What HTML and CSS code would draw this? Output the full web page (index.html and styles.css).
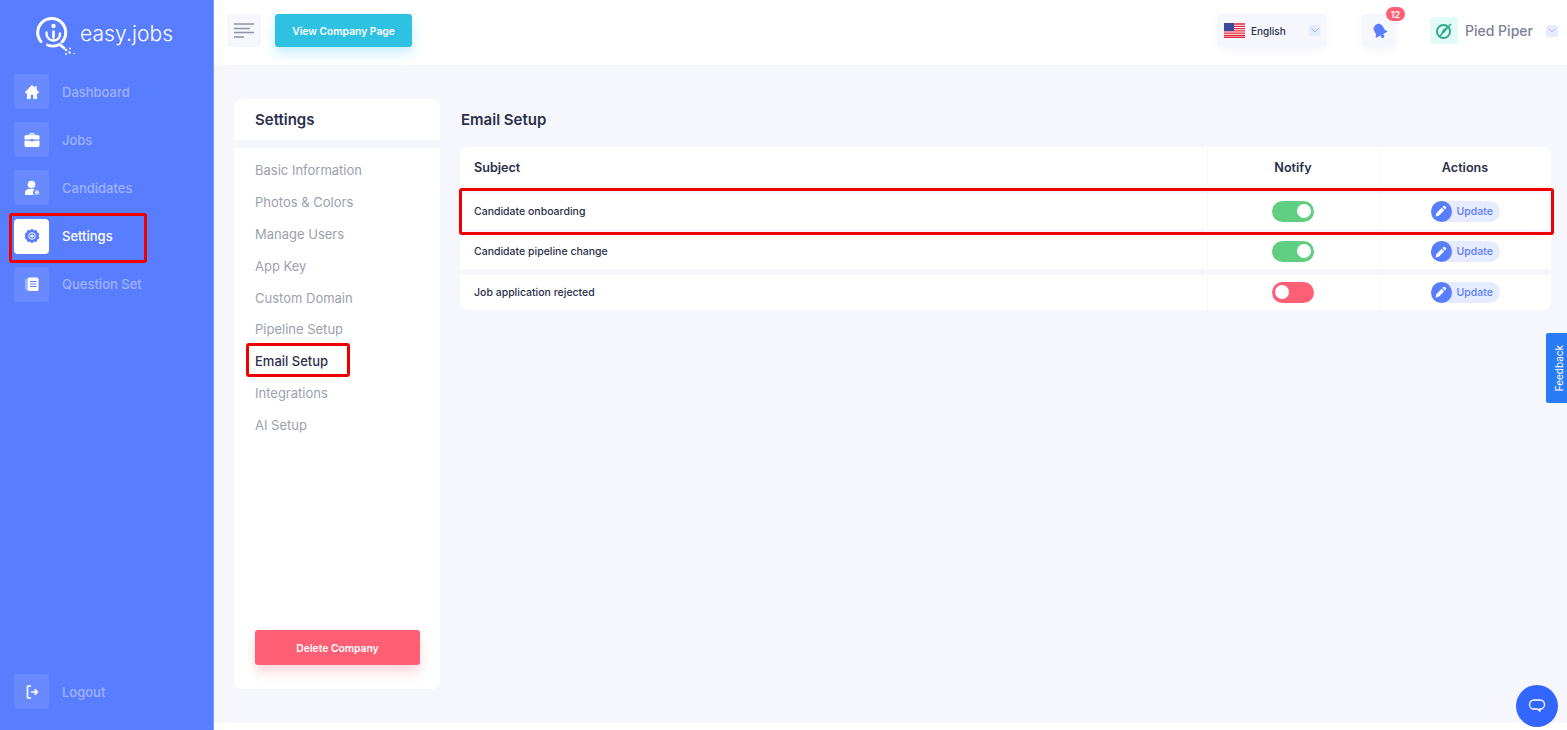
FILE: index.html
```html
<!DOCTYPE html>
<html lang="en">
<head>
<meta charset="utf-8">
<title>Email Setup</title>
<link rel="stylesheet" href="styles.css">
</head>
<body>
<div class="app">
  <aside class="sidebar">
    <div class="brand">
      <svg class="brand-mark" viewBox="0 0 44 44" width="44" height="44" fill="none" stroke="#fff">
        <path d="M8 27.500A14 14 0 1 1 29 28" stroke-width="3" stroke-linecap="round"/>
        <path d="M14.500 31A14.500 14.500 0 0 0 26.500 30.500L31 34" stroke-width="2.800" stroke-linecap="round"/>
        <path d="M13.500 18.500a7 7 0 0 0 7.300 8c3.900 0 6.400-3 6.200-7" stroke-width="2.300" stroke-linecap="round"/>
        <path d="M20.500 17.500v6" stroke-width="2.600" stroke-linecap="round"/>
        <circle cx="20.500" cy="12" r="2.200" fill="#fff" stroke="none"/>
        <g fill="#fff" stroke="none"><circle cx="33" cy="36" r="1.300"/><circle cx="37" cy="34.500" r="1"/><circle cx="36.500" cy="38.500" r="1.200"/><circle cx="33" cy="40" r=".9"/><circle cx="41" cy="39.500" r=".7"/></g>
      </svg>
      <span class="brand-name">easy.jobs</span>
    </div>
    <nav class="side-nav">
      <a class="side-item"><span class="side-icon"><svg viewBox="0 0 16 16" width="16" height="16" fill="#fff"><path d="M8 1 .8 8.200l.9 1H3V15h3.700v-4.200h2.600V15H13V9.200h1.300l.9-1-2.500-2.500V2.200h-2v1.500z"/></svg></span><span class="side-label">Dashboard</span></a>
      <a class="side-item"><span class="side-icon"><svg viewBox="0 0 16 16" width="16" height="16" fill="#fff"><path d="M5.500 3V2a1 1 0 0 1 1-1h3a1 1 0 0 1 1 1v1h3.500A1.500 1.500 0 0 1 15.500 4.500V7.600H9.300V7H6.700v.6H.5V4.500A1.500 1.500 0 0 1 2 3zm1.200 0h2.600V2.200H6.700zM.5 8.700h6.200v.9h2.600v-.9h6.200v4.800a1.500 1.500 0 0 1-1.500 1.500H2a1.500 1.500 0 0 1-1.500-1.500z"/></svg></span><span class="side-label">Jobs</span></a>
      <a class="side-item"><span class="side-icon"><svg viewBox="0 0 16 16" width="16" height="16" fill="#fff"><circle cx="7.500" cy="4.500" r="3.800"/><path d="M1 15v-2.500C1 10.300 3 9 5 9h4c.7 0 1.300.1 1.900.4-1.200.5-2 1.700-2 3 0 1 .4 1.900 1.100 2.600z"/><circle cx="13" cy="12.500" r="2.300" opacity=".7"/></svg></span><span class="side-label">Candidates</span></a>
      <a class="side-item is-active"><span class="side-icon"><svg viewBox="0 0 16 16" width="16" height="16"><path fill="#597dff" d="m8 .8 2 1.500 2.500-.2.900 2.300 2 1.500L14.700 8l.7 2.100-2 1.500-.9 2.300-2.500-.2L8 15.200l-2-1.500-2.500.2-.9-2.300-2-1.500L1.300 8 .6 5.900l2-1.500.9-2.300 2.500.2z"/><circle cx="8" cy="8" r="3.300" fill="none" stroke="#fff" stroke-width="1"/><circle cx="8" cy="8" r="1.600" fill="#fff"/></svg></span><span class="side-label">Settings</span></a>
      <a class="side-item"><span class="side-icon"><svg viewBox="0 0 16 16" width="16" height="16"><rect x="3.500" y="1.500" width="11" height="13.500" rx="1.500" fill="#fff"/><path d="M2 3v11" stroke="#a9c4ff" stroke-width="1.500"/><path d="M6 5.500h6.500M6 8h6.500M6 10.500h6.500" stroke="#597dff"/></svg></span><span class="side-label">Question Set</span></a>
    </nav>
    <a class="side-item logout"><span class="side-icon"><svg viewBox="0 0 16 16" width="16" height="16" fill="none" stroke="#fff" stroke-width="1.600" stroke-linecap="round" stroke-linejoin="round"><path d="M6.500 2H3.500v12h3"/><path d="M7.500 8h6M11 5.700 13.500 8 11 10.300"/></svg></span><span class="side-label">Logout</span></a>
  </aside>

  <div class="workspace">
    <header class="topbar">
      <button class="menu-btn" aria-label="Menu">
        <svg viewBox="0 0 20 15" width="20" height="15" stroke="#8f93a8" stroke-width="1.300"><path d="M0 1h20M0 5.500h16M0 9.500h20M0 14h10"/></svg>
      </button>
      <a class="view-btn">View Company Page</a>
      <div class="lang">
        <svg class="flag" viewBox="0 0 21 15" width="21" height="15">
          <rect width="21" height="15" fill="#fff"/>
          <path d="M0 1h21M0 3.300h21M0 5.600h21M0 7.900h21M0 10.200h21M0 12.500h21M0 14.500h21" stroke="#e0263c" stroke-width="1.300"/>
          <rect width="10" height="8" fill="#3c4a9c"/>
        </svg>
        <span class="lang-name">English</span>
        <span class="chev"><svg viewBox="0 0 8 5" width="8" height="5" fill="none" stroke="#a9b6f0" stroke-width="1"><path d="m.5.500 3.500 3.500L7.500.5"/></svg></span>
      </div>
      <div class="bell">
        <svg viewBox="0 0 16 16" width="17" height="17"><g transform="rotate(-28 8 8)"><path d="M8 1.500c-3.200 0-4.600 2.600-4.600 5.200v3L1.500 12.500h13L12.600 9.700v-3C12.600 4.100 11.200 1.500 8 1.500z" fill="#597dff"/><circle cx="8" cy="14" r="1.700" fill="#597dff"/><path d="M3.400 9.700v-3C3.400 5 4 3.400 5.500 2.400" stroke="#ff8fc0" stroke-width=".7" fill="none"/></g></svg>
        <span class="badge">12</span>
      </div>
      <div class="company">
        <span class="company-logo">
          <svg viewBox="0 0 18 18" width="18" height="18" fill="none" stroke="#2fa98c"><circle cx="8.500" cy="9.500" r="6.500" stroke-width="2"/><path d="M4.500 14.500 16 2" stroke-width="1.600"/><path d="M8 7.500 12 5l-2 5-4 2.500z" fill="#2fa98c" stroke="none"/></svg>
        </span>
        <span class="company-name">Pied Piper</span>
        <span class="chev chev-sm"><svg viewBox="0 0 8 5" width="8" height="5" fill="none" stroke="#a9b6f0" stroke-width="1"><path d="m.5.500 3.500 3.500L7.500.5"/></svg></span>
      </div>
    </header>

    <main class="main">
      <section class="settings">
        <h2 class="settings-title">Settings</h2>
        <div class="settings-body">
          <ul class="settings-list">
            <li>Basic Information</li>
            <li>Photos &amp; Colors</li>
            <li>Manage Users</li>
            <li>App Key</li>
            <li>Custom Domain</li>
            <li>Pipeline Setup</li>
            <li class="is-current">Email Setup</li>
            <li>Integrations</li>
            <li>AI Setup</li>
          </ul>
          <a class="delete-btn">Delete Company</a>
        </div>
      </section>

      <section class="content">
        <h2 class="content-title">Email Setup</h2>
        <div class="table">
          <div class="row row-head">
            <div class="cell cell-subject">Subject</div>
            <div class="cell cell-mid">Notify</div>
            <div class="cell cell-mid">Actions</div>
          </div>
          <div class="row row-first">
            <div class="cell cell-subject">Candidate onboarding</div>
            <div class="cell cell-mid"><span class="toggle on"><i></i></span></div>
            <div class="cell cell-mid"><a class="update"><span class="update-icon"><svg viewBox="0 0 12 12" width="12" height="12" fill="#fff"><path d="M8.200 1.300a1.400 1.400 0 0 1 2 0l.5.500a1.400 1.400 0 0 1 0 2L9.900 4.600 7.400 2.100zM6.700 2.800l2.500 2.500-5.400 5.400-3.200.7.700-3.200z"/></svg></span><span>Update</span></a></div>
          </div>
          <div class="row">
            <div class="cell cell-subject">Candidate pipeline change</div>
            <div class="cell cell-mid"><span class="toggle on"><i></i></span></div>
            <div class="cell cell-mid"><a class="update"><span class="update-icon"><svg viewBox="0 0 12 12" width="12" height="12" fill="#fff"><path d="M8.200 1.300a1.400 1.400 0 0 1 2 0l.5.500a1.400 1.400 0 0 1 0 2L9.900 4.600 7.400 2.100zM6.700 2.800l2.500 2.500-5.400 5.400-3.200.7.700-3.200z"/></svg></span><span>Update</span></a></div>
          </div>
          <div class="row row-last">
            <div class="cell cell-subject">Job application rejected</div>
            <div class="cell cell-mid"><span class="toggle off"><i></i></span></div>
            <div class="cell cell-mid"><a class="update"><span class="update-icon"><svg viewBox="0 0 12 12" width="12" height="12" fill="#fff"><path d="M8.200 1.300a1.400 1.400 0 0 1 2 0l.5.500a1.400 1.400 0 0 1 0 2L9.900 4.600 7.400 2.100zM6.700 2.800l2.500 2.500-5.400 5.400-3.200.7.700-3.200z"/></svg></span><span>Update</span></a></div>
          </div>
        </div>
      </section>
    </main>
    <div class="footer-strip"></div>
  </div>
</div>

<div class="mark mark-side"></div>
<div class="mark mark-email"></div>
<div class="mark mark-row"></div>

<a class="feedback"><span>Feedback</span></a>
<a class="chat" aria-label="Chat">
  <svg viewBox="0 0 18 18" width="18" height="18" fill="none" stroke="#fff" stroke-width="1.300" stroke-linejoin="round"><path d="M6 3h6a4.500 4.500 0 0 1 0 9h-.5l.5 2.300L9.300 12H6A4.500 4.500 0 0 1 6 3z"/></svg>
</a>
</body>
</html>
```

FILE: styles.css
```css
* { box-sizing: border-box; }
html, body { margin: 0; height: 100%; overflow: hidden; }
body { font-family: Inter, "Noto Sans", "Liberation Sans", sans-serif; color: #2a2f4a; background: #fff; position: relative; }
a { text-decoration: none; color: inherit; }
h2, ul { margin: 0; padding: 0; }
button { border: 0; padding: 0; font: inherit; }

.app { display: flex; height: 730px; }

/* Sidebar */
.sidebar { width: 214px; flex: none; background: #597dff; display: flex; flex-direction: column; padding: 0 14px 21px; border-right: 1px solid #7e9aff; }
.brand { display: flex; align-items: center; height: 74px; padding: 0 0 8px 19px; gap: 3px; }
.brand-mark { flex: none; margin-top: 5px; }
.brand-name { color: #fff; font-size: 21px; font-weight: 300; letter-spacing: .1px; }
.side-nav { display: flex; flex-direction: column; gap: 13.200px; }
.side-item { display: flex; align-items: center; gap: 13px; color: rgba(255,255,255,.42); font-size: 13px; font-weight: 500; height: 35px; }
.side-icon { width: 35px; height: 35px; border-radius: 4px; background: rgba(255,255,255,.1); display: flex; align-items: center; justify-content: center; flex: none; }
.side-item.is-active { color: #fff; }
.is-active .side-icon { background: #fff; }
.logout { margin-top: auto; }

/* Top bar */
.workspace { flex: 1; display: flex; flex-direction: column; min-width: 0; }
.topbar { height: 65px; flex: none; display: flex; align-items: flex-start; padding: 14px 9px 0 13px; background: #fff; }
.menu-btn { width: 34px; height: 33px; border-radius: 4px; background: #f5f7fd; display: flex; align-items: center; justify-content: center; }
.view-btn { margin-left: 14px; width: 137px; height: 33px; border-radius: 3px; background: #2fc1e1; color: #fff; font-size: 10.300px; font-weight: 600; display: flex; align-items: center; justify-content: center; box-shadow: 0 6px 12px rgba(47,193,225,.28); }
.lang { margin-left: auto; width: 110px; height: 33px; border-radius: 4px; background: #f5f7fd; display: flex; align-items: center; padding: 0 7px; box-shadow: 0 4px 10px rgba(240,242,250,.6); }
.lang-name { margin-left: 6px; font-size: 10px; font-weight: 500; color: #2a2f4a; }
.chev { margin-left: auto; width: 11px; height: 11px; border-radius: 2px; background: #e7ebff; display: flex; align-items: center; justify-content: center; }
.bell { margin-left: 35px; width: 34px; height: 33px; border-radius: 4px; background: #f5f7fd; display: flex; align-items: center; justify-content: center; position: relative; box-shadow: 0 4px 10px rgba(240,242,250,.6); }
.badge { position: absolute; top: -7px; right: -9px; width: 19px; height: 14px; border-radius: 7px; background: #ff5f74; color: #fff; font-size: 9px; font-weight: 600; display: flex; align-items: center; justify-content: center; }
.company { margin-left: 34px; display: flex; align-items: center; height: 33px; }
.company-logo { width: 28px; height: 27px; border-radius: 2px; background: #e2fbf6; display: flex; align-items: center; justify-content: center; }
.company-name { margin-left: 7px; font-size: 14px; font-weight: 500; color: #7d8197; width: 81px; }
.chev-sm { margin-left: 0; width: 12px; height: 12px; }

/* Main */
.main { flex: 1; background: #f5f7fd; display: flex; gap: 20px; padding: 34px 16px 34px 20px; min-height: 0; }
.footer-strip { height: 7px; flex: none; background: #fff; }

.settings { width: 206px; flex: none; display: flex; flex-direction: column; gap: 8px; }
.settings-title { height: 41px; flex: none; background: #fff; border-radius: 8px 8px 0 0; font-size: 15px; font-weight: 600; display: flex; align-items: center; padding-left: 21px; color: #2a2f4a; }
.settings-body { flex: 1; background: #fff; border-radius: 0 0 8px 8px; display: flex; flex-direction: column; padding: 6px 20px 24px 21px; }
.settings-list { list-style: none; }
.settings-list li { height: 31.900px; display: flex; align-items: center; font-size: 13px; color: #9c9fae; }
.settings-list li.is-current { color: #2a2f4a; font-weight: 500; }
.delete-btn { margin-top: auto; height: 35px; border-radius: 3px; background: #ff5f74; color: #fff; font-size: 10.300px; font-weight: 600; display: flex; align-items: center; justify-content: center; box-shadow: 0 7px 12px rgba(255,95,116,.25); }

.content { flex: 1; min-width: 0; }
.content-title { height: 41px; padding-left: 1px; font-size: 15px; font-weight: 600; display: flex; align-items: center; color: #2a2f4a; }
.table { margin-top: 7px; display: flex; flex-direction: column; gap: 5.500px; }
.row { display: grid; grid-template-columns: 1fr 172px 172px; height: 35px; background: #fff; }
.row-head { height: 40px; border-radius: 8px 8px 0 0; }
.row-last { border-radius: 0 0 8px 8px; }
.row-first { margin-top: 1px; }
.cell { display: flex; align-items: center; font-size: 10.500px; font-weight: 500; color: #2a2f4a; }
.cell-subject { padding-left: 14px; }
.cell-mid { justify-content: center; border-left: 1px solid #f5f7fd; padding-right: 1px; }
.row-head .cell { font-size: 12.600px; font-weight: 600; }

.toggle { width: 42px; height: 21px; border-radius: 11px; position: relative; display: block; }
.toggle.on { background: #60ce83; }
.toggle.off { background: #ff5f74; }
.toggle i { position: absolute; top: 3px; width: 14px; height: 14px; border-radius: 50%; background: #fff; }
.toggle.on i { right: 3px; }
.toggle.off i { left: 3px; }

.update { width: 69px; height: 21px; border-radius: 11px; background: #e7ebff; display: flex; align-items: center; color: #597dff; font-size: 10.500px; font-weight: 500; gap: 5px; }
.update-icon { width: 21px; height: 21px; border-radius: 50%; background: #597dff; display: flex; align-items: center; justify-content: center; flex: none; }

/* Annotation frames */
.mark { position: absolute; border: 3px solid #ee0000; border-radius: 3px; pointer-events: none; }
.mark-side { left: 9px; top: 213px; width: 138px; height: 50px; }
.mark-email { left: 246px; top: 343px; width: 104px; height: 34px; }
.mark-row { left: 459px; top: 188px; width: 1095px; height: 47px; }

/* Floating */
.feedback { position: absolute; right: 0; top: 333px; width: 21px; height: 70px; padding-left: 5px; background: #2a7bf5; border-radius: 2px 0 0 2px; color: #fff; font-size: 10px; display: flex; align-items: center; justify-content: center; }
.feedback span { writing-mode: vertical-rl; transform: rotate(180deg); }
.chat { position: absolute; left: 1516px; top: 685px; width: 42px; height: 42px; border-radius: 50%; background: #3366ff; display: flex; align-items: center; justify-content: center; }
```
